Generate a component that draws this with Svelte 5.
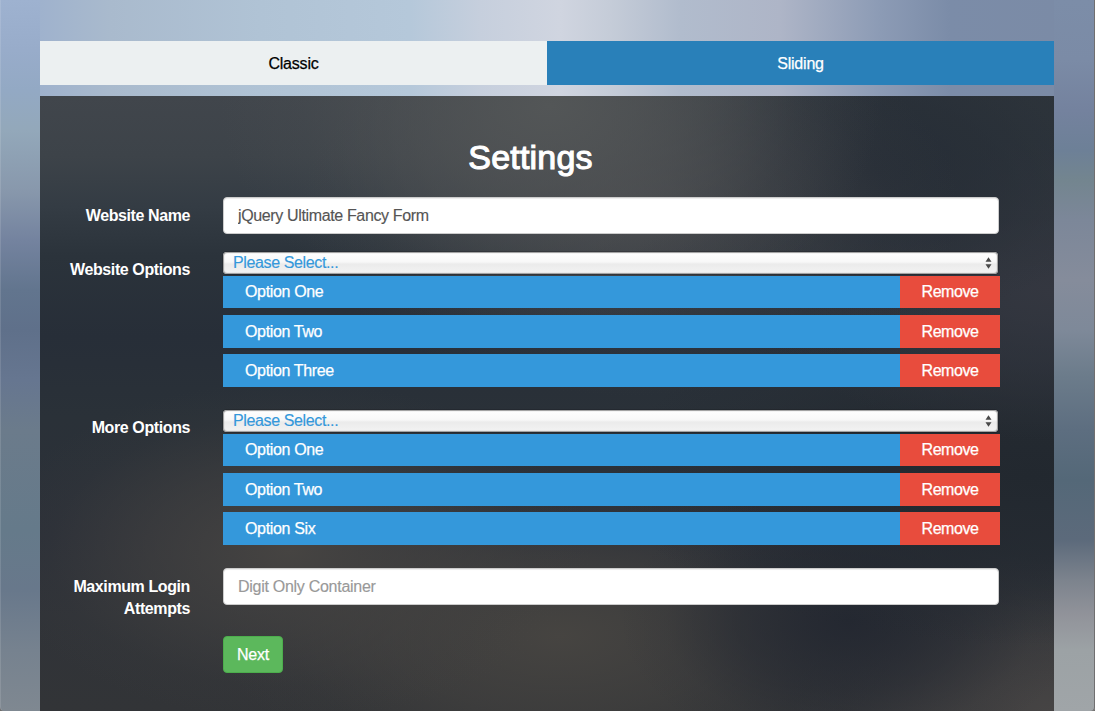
<script>
  let name = $state('jQuery Ultimate Fancy Form');
  let attempts = $state('');
  let groups = $state([
    { label: 'Website Options', items: ['Option One', 'Option Two', 'Option Three'] },
    { label: 'More Options', items: ['Option One', 'Option Two', 'Option Six'] }
  ]);
  function remove(group, index) {
    group.items.splice(index, 1);
  }
</script>

<main class="page">
  <nav class="tabs">
    <button class="tab">Classic</button>
    <button class="tab active">Sliding</button>
  </nav>

  <section class="panel">
    <h1>Settings</h1>

    <div class="row name-row">
      <label for="site-name">Website Name</label>
      <input id="site-name" bind:value={name} />
    </div>

    {#each groups as group}
      <div class="row group-row">
        <span class="label">{group.label}</span>
        <div class="field">
          <div class="select">
            <span>Please Select...</span>
            <svg width="7" height="12" viewBox="0 0 7 12">
              <path d="M3.5 0.3 6.5 4.7H.5ZM.5 7.3H6.5L3.5 11.7Z" fill="#484848" />
            </svg>
          </div>
          <ul>
            {#each group.items as item, i}
              <li>
                <span class="item">{item}</span>
                <button class="remove" onclick={() => remove(group, i)}>Remove</button>
              </li>
            {/each}
          </ul>
        </div>
      </div>
    {/each}

    <div class="row attempts-row">
      <label for="attempts">Maximum Login Attempts</label>
      <input id="attempts" placeholder="Digit Only Container" bind:value={attempts} />
    </div>

    <button class="next">Next</button>
  </section>
</main>

<style>
  :global(body) {
    margin: 0;
    overflow: hidden;
    background: #6f6d6b;
  }
  * {
    box-sizing: border-box;
  }
  .page {
    height: 711px;
    padding: 41px 41px 0 40px;
    display: flex;
    flex-direction: column;
    gap: 11px;
    overflow: hidden;
    border-radius: 0 0 4px 4px;
    font: 16px/22px 'Liberation Sans', Arial, sans-serif;
    box-shadow: inset -1px 0 #706f70, inset 1px 0 rgba(255, 255, 255, 0.12);
    background:
      linear-gradient(#9eb2d0 0, #98acca 50px, #93a9c4 90px, #93a8ba 130px, #8898ac 190px, #74839f 240px, #62758e 290px, #5f708a 330px, #667690 380px, #6b7b8b 430px, #657a8a 530px, #68788b 590px, #76828f 650px, #7f8891 711px) 0 0 / 40px 100% no-repeat,
      linear-gradient(#7c8da8 0, #7b8ba6 60px, #74829e 110px, #6d8097 150px, #73858f 180px, #7c8799 220px, #858c9b 280px, #7e8999 330px, #6c7c8b 375px, #5d6e80 430px, #546878 480px, #5c6a7b 540px, #7c838d 580px, #91939a 615px, #9ca2a5 650px, #a0a5a8 711px) 100% 0 / 41px 100% no-repeat,
      linear-gradient(90deg, #9cb0cd 0, #9fb2cd 40px, #a9bacd 110px, #b0c3d5 260px, #b5c8da 410px, #c6cfdd 480px, #d0d5e0 560px, #c5ccd8 610px, #b1bccd 680px, #aeb5c7 780px, #8c9bb5 880px, #7b8ca8 950px, #7b8ba6 1055px) 0 0 / 100% 96px no-repeat;
  }
  button {
    margin: 0;
    border: 0;
    font: inherit;
    color: #fff;
    cursor: pointer;
    letter-spacing: -0.2px;
    -webkit-text-stroke: 0.25px currentColor;
  }
  .tabs {
    display: grid;
    grid-template-columns: 1fr 1fr;
    height: 44px;
    flex: none;
  }
  .tab {
    padding: 1px 0 0;
    background: #ecf0f1;
    color: #000;
  }
  .tab.active {
    background: #2980b9;
    color: #fff;
  }
  .panel {
    flex: 1;
    padding: 37px 55px 0 15px;
    background:
      radial-gradient(ellipse 330px 230px at 510px 10px, #535657 0, rgba(83, 86, 87, 0.55) 40%, rgba(83, 86, 87, 0.15) 75%, rgba(83, 86, 87, 0) 100%),
      radial-gradient(ellipse 330px 190px at 590px 110px, rgba(76, 76, 79, 0.8) 0, rgba(76, 76, 79, 0.4) 45%, rgba(76, 76, 79, 0.1) 78%, rgba(76, 76, 79, 0) 100%),
      radial-gradient(ellipse 260px 150px at 830px 75px, #262d36 0, rgba(38, 45, 54, 0.6) 45%, rgba(38, 45, 54, 0.15) 78%, rgba(38, 45, 54, 0) 100%),
      radial-gradient(ellipse 300px 150px at 1014px 195px, #343740 0, rgba(52, 55, 64, 0.5) 50%, rgba(52, 55, 64, 0) 100%),
      radial-gradient(ellipse 420px 170px at 990px 380px, #22282f 0, rgba(34, 40, 47, 0.7) 45%, rgba(34, 40, 47, 0.2) 78%, rgba(34, 40, 47, 0) 100%),
      radial-gradient(ellipse 230px 140px at 810px 525px, #242831 0, rgba(36, 40, 49, 0.5) 50%, rgba(36, 40, 49, 0.1) 80%, rgba(36, 40, 49, 0) 100%),
      radial-gradient(ellipse 300px 170px at 250px 455px, #464442 0, rgba(70, 68, 66, 0.5) 48%, rgba(70, 68, 66, 0.1) 80%, rgba(70, 68, 66, 0) 100%),
      radial-gradient(ellipse 340px 160px at 520px 540px, #464441 0, rgba(70, 68, 65, 0.55) 48%, rgba(70, 68, 65, 0.12) 80%, rgba(70, 68, 65, 0) 100%),
      radial-gradient(ellipse 260px 150px at 1010px 615px, #464444 0, rgba(70, 68, 68, 0.55) 48%, rgba(70, 68, 68, 0.12) 80%, rgba(70, 68, 68, 0) 100%),
      linear-gradient(90deg, transparent 500px, rgba(43, 50, 57, 0.9) 850px) 0 0 / 100% 170px no-repeat,
      linear-gradient(#41464c 0, #3d4349 60px, #343c44 110px, #2b333b 160px, #272e38 240px, #2a3138 320px, #2c3038 440px, #303338 520px, #323437 615px);
  }
  h1 {
    margin: 0 -7px 0 0;
    height: 64px;
    text-align: center;
    color: #fff;
    font-size: 34px;
    line-height: 48px;
    font-weight: 500;
    letter-spacing: 0.2px;
    -webkit-text-stroke: 1.1px #fff;
  }
  .row {
    display: grid;
    grid-template-columns: 135px 776px;
    column-gap: 33px;
    align-items: start;
  }
  label,
  .label {
    color: #fff;
    font-weight: 700;
    text-align: right;
    letter-spacing: -0.4px;
    padding-top: 8px;
  }
  .name-row {
    height: 55px;
  }
  .group-row {
    height: 158px;
  }
  .group-row .label {
    padding-top: 7px;
  }
  .attempts-row {
    height: 68px;
  }
  input {
    width: 776px;
    height: 37px;
    padding: 0 14px;
    border: 1px solid #ccc;
    border-radius: 4px;
    background: #fff;
    box-shadow: inset 0 1px 1px rgba(0, 0, 0, 0.075);
    color: #555;
    font: inherit;
    letter-spacing: -0.36px;
    outline: none;
    -webkit-text-stroke: 0.15px currentColor;
  }
  input::placeholder {
    color: #999;
    letter-spacing: -0.28px;
  }
  .field {
    width: 777px;
  }
  .select {
    display: flex;
    justify-content: space-between;
    align-items: center;
    width: 775px;
    height: 22px;
    margin: 0 0 2px;
    padding: 0 6px 0 10px;
    border-radius: 4px;
    background: linear-gradient(#fff 0, #f8f8f8 45%, #ebebeb 55%, #f3f3f3 100%);
    box-shadow: 0 0 0 1px rgba(20, 20, 24, 0.25), inset 0 0 1px 1px #999;
    color: #3498db;
    letter-spacing: -0.37px;
    -webkit-text-stroke: 0.15px currentColor;
  }
  .select span {
    line-height: 20px;
    padding-bottom: 1px;
  }
  ul {
    margin: 0;
    padding: 0;
    list-style: none;
  }
  li {
    display: grid;
    grid-template-columns: 677px 100px;
    height: 33px;
    margin-bottom: 6px;
    color: #fff;
    line-height: 22px;
  }
  li:first-child {
    height: 32px;
    margin-bottom: 7px;
  }
  .item,
  .remove {
    padding: 6px 22px 5px;
    -webkit-text-stroke: 0.25px #fff;
  }
  li:first-child > * {
    padding-top: 5px;
  }
  .item {
    background: #3498db;
    letter-spacing: -0.35px;
  }
  .remove {
    padding-left: 0;
    padding-right: 0;
    background: #e84c3d;
    letter-spacing: -0.45px;
  }
  .next {
    display: block;
    width: 60px;
    height: 37px;
    margin-left: 168px;
    padding: 0;
    border: 1px solid #4cae4c;
    border-radius: 4px;
    background: #5cb85c;
  }
</style>
